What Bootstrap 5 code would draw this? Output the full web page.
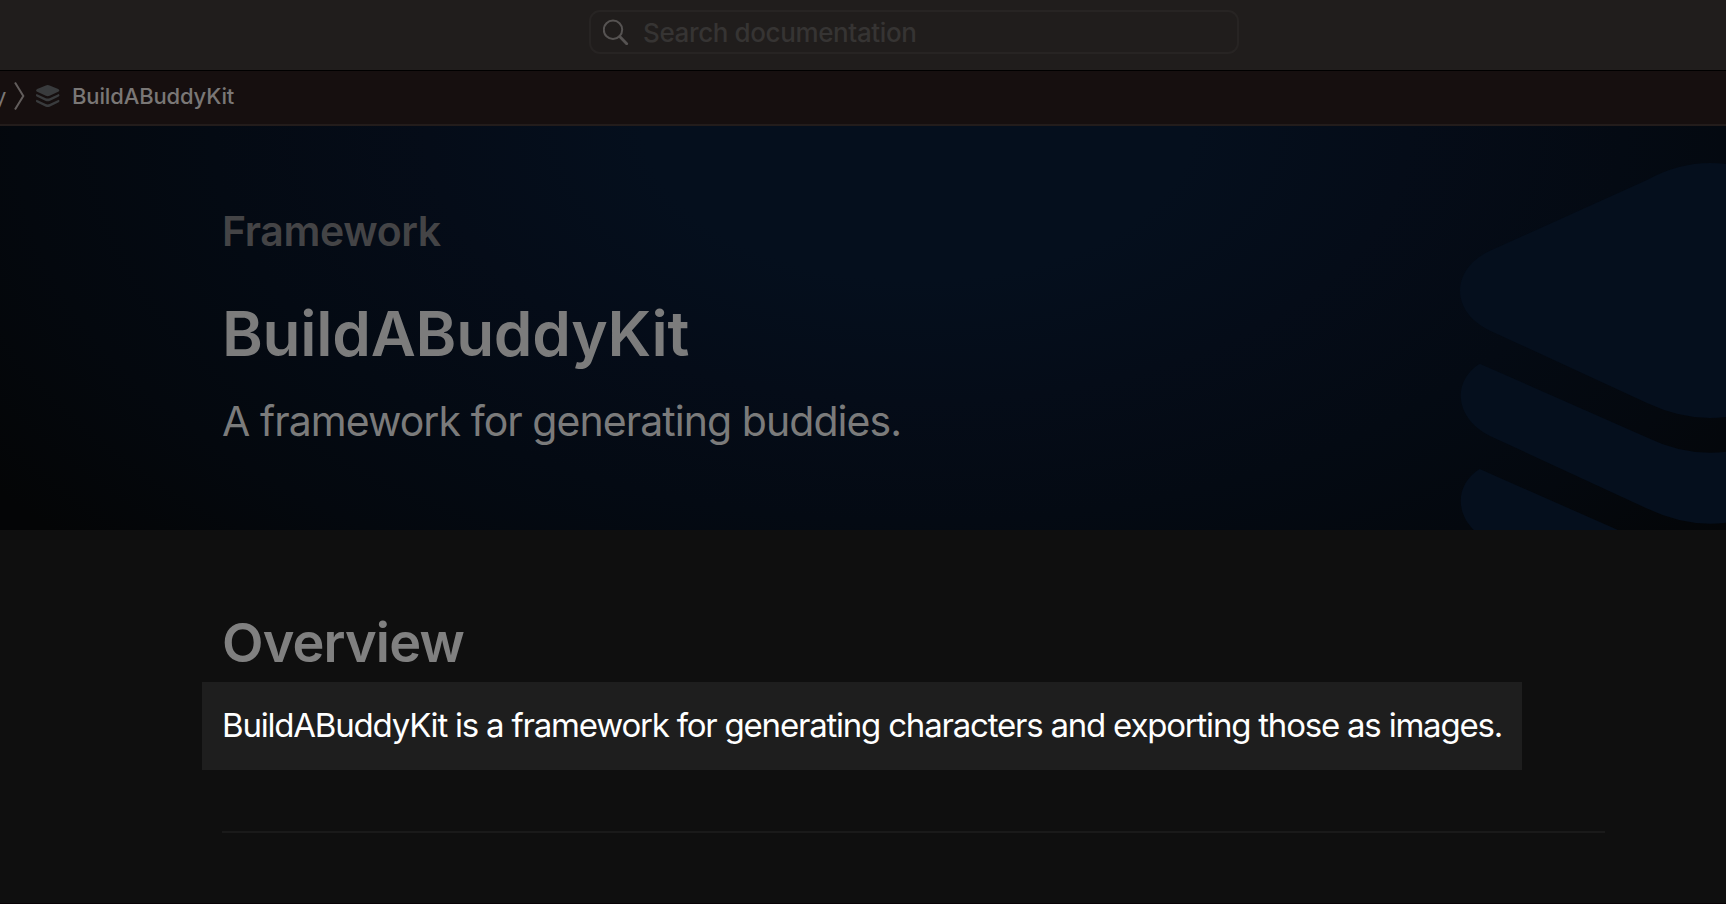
<!DOCTYPE html>
<html lang="en">
<head>
<meta charset="utf-8">
<meta name="viewport" content="width=device-width, initial-scale=1">
<title>BuildABuddyKit</title>
<link href="https://cdn.jsdelivr.net/npm/bootstrap@5.3.0/dist/css/bootstrap.min.css" rel="stylesheet">
<style>
  body { background: #0f0f0f; color: #808080; font-family: Inter, "Liberation Sans", sans-serif; height: 904px; overflow: hidden; border-bottom: 1px solid #080205; }
  .topbar { height: 71px; background: #201d1c; border-bottom: 1px solid #000; padding: 10px 0 0 589px; }
  .search-box { width: 650px; height: 44px; border: 2px solid #272423; border-radius: 11px; padding-left: 12px; }
  .search-box input { background: none; border: 0; outline: 0; padding: 1px 0 0; margin-left: 14px; color: #363433; font-size: 26px; letter-spacing: -.38px; line-height: 39px; height: 40px; font-weight: 500; }
  .search-box input::placeholder { color: #363433; opacity: 1; }
  .crumbs { height: 55px; background: #160f0f; border-bottom: 2px solid #231c1b; padding-bottom: 3px; font-size: 22px; line-height: 30px; color: #7a7776; }
  .crumb-parent { width: 14px; height: 30px; overflow: hidden; }
  .crumb-parent span { margin-left: -6px; }
  .crumb-icon { margin-left: 11px; }
  .crumb-current { font-weight: 500; letter-spacing: -.14px; margin-left: 12px; }
  .intro { height: 404px; padding: 80px 0 0 222px; background: radial-gradient(980px 550px at 918px 0, #050f1d 0%, #050f1d 28%, #050c18 50%, #040a13 72%, #04080e 92%, #040506 115%); }
  .intro-art { right: -234px; top: 0; }
  .eyebrow { font-size: 41px; line-height: 50px; font-weight: 600; letter-spacing: -.38px; color: #444446; margin-bottom: 41px; }
  .page-title { font-size: 62px; line-height: 74px; font-weight: 600; letter-spacing: -.26px; color: #7c7c7c; margin-bottom: 25px; }
  .abstract { font-size: 41px; line-height: 50px; letter-spacing: -.95px; color: #7b7b7b; }
  .doc-main { padding: 80px 121px 0 202px; }
  .section-title { font-size: 54px; line-height: 66px; font-weight: 600; letter-spacing: -.85px; color: #808080; margin: 0 0 6px 20px; }
  .spotlight { width: 1320px; height: 88px; background: #1e1e1e; color: #fff; padding: 0 0 2px 20px; font-size: 33px; line-height: 44px; letter-spacing: -1.21px; white-space: nowrap; }
  .rule { height: 2px; background: #1a1a1a; margin: 61px 0 0 20px; }
</style>
</head>
<body>
<header class="topbar">
  <div class="search-box d-flex align-items-center">
    <svg width="26" height="26" viewBox="0 0 26 26" fill="none" stroke="#565352" stroke-linecap="round"><circle cx="10" cy="10.8" r="9.2" stroke-width="2"/><path d="M16.7 17.5l7 7.2" stroke-width="2.8"/></svg>
    <input type="text" class="flex-grow-1" placeholder="Search documentation" aria-label="Search">
  </div>
</header>
<nav class="crumbs d-flex align-items-center" aria-label="Breadcrumb">
  <div class="crumb-parent"><span>y</span></div>
  <svg width="11" height="28" viewBox="0 0 11 28" fill="none" stroke="#625d5c" stroke-width="2"><path d="M1 .5L9.3 14L1 27.5"/></svg>
  <svg class="crumb-icon" width="24" height="24" viewBox="0 0 24 24" fill="#393b3d">
    <path d="M9.8 1.4Q11.7.6 13.6 1.4L22.2 5.1Q24.4 6.4 22.2 7.8L13.6 11.8Q11.7 12.6 9.8 11.8L1.2 7.8Q-1 6.4 1.2 5.1Z"/>
    <path id="leaf" d="M.6 9.9L9.8 14.2Q11.7 15 13.6 14.2L22.8 9.9Q24.4 11.6 22.3 12.8L13.6 16.9Q11.7 17.7 9.8 16.9L1.1 12.8Q-1 11.6.6 9.9Z"/>
    <use href="#leaf" y="5.8"/>
  </svg>
  <span class="crumb-current">BuildABuddyKit</span>
</nav>
<section class="intro position-relative overflow-hidden">
  <svg class="intro-art position-absolute" width="500" height="404" viewBox="0 0 500 404" fill="#050f1d">
    <path d="M30 124.7L187 54Q218 37 250 37T313 54L470 124.7C510 143 510 186 470 204.7L313 277Q281 292 250 292T187 277L30 204.7C-10 186 -10 143 30 124.7Z"/>
    <path id="layer" d="M19.7 237.7L187 311.5Q218 326.7 250 326.7T313 311.5L480.3 237.7C508 255 506 292 470 310L313 382.5Q281 397.7 250 397.7T187 382.5L30 310C-6 292 -8 255 19.7 237.7Z"/>
    <use href="#layer" y="105.3"/>
  </svg>
  <div class="position-relative">
    <div class="eyebrow">Framework</div>
    <h1 class="page-title">BuildABuddyKit</h1>
    <p class="abstract mb-0">A framework for generating buddies.</p>
  </div>
</section>
<main class="doc-main">
  <h2 class="section-title">Overview</h2>
  <div class="spotlight d-flex align-items-center">BuildABuddyKit is a framework for generating characters and exporting those as images.</div>
  <div class="rule"></div>
</main>
<script src="https://cdn.jsdelivr.net/npm/bootstrap@5.3.0/dist/js/bootstrap.bundle.min.js"></script>
</body>
</html>
